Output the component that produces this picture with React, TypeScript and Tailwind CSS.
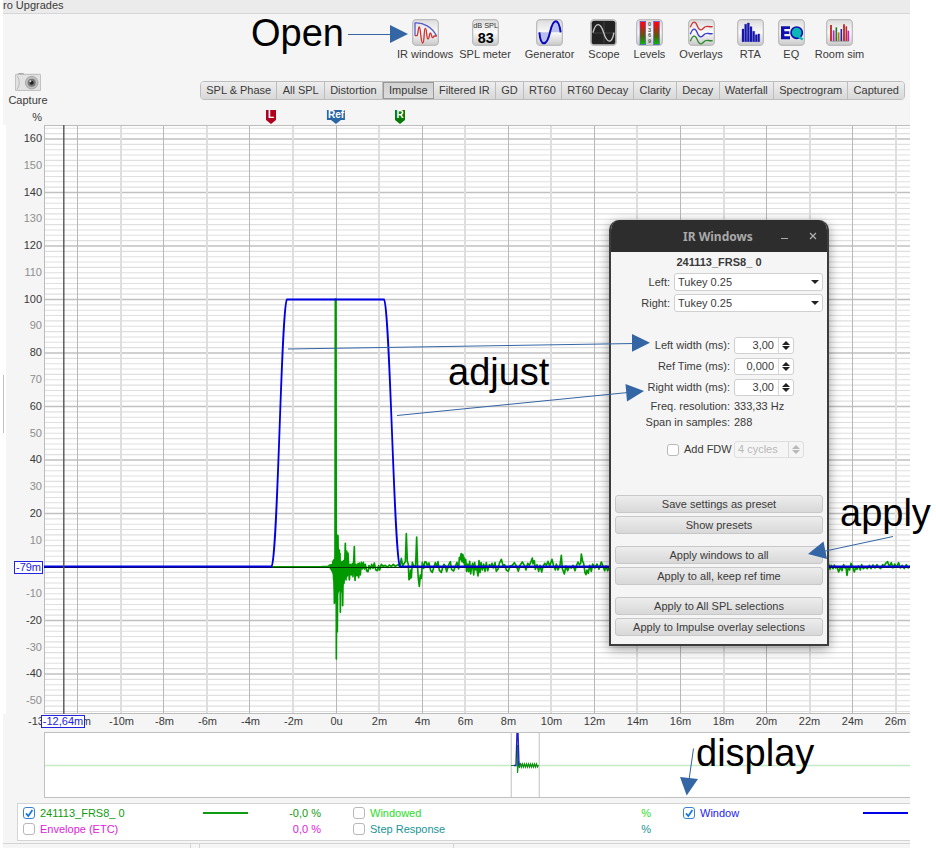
import React from "react";

const range = (from: number, to: number, step: number) =>
  Array.from({ length: Math.floor((to - from) / step) + 1 }, (_, i) => from + i * step);

function IconFrame({ children }: { children?: React.ReactNode }) {
  return (
    <svg viewBox="0 0 81 81" className="size-[27px]" aria-hidden="true">
      <defs>
        <linearGradient id="face" x1="0" y1="0" x2="0" y2="1">
          <stop offset="0" stopColor="#dcdcdc" />
          <stop offset="0.5" stopColor="#fafafa" />
          <stop offset="1" stopColor="#c9c9c9" />
        </linearGradient>
        <linearGradient id="level" x1="0" y1="0" x2="0" y2="1">
          <stop offset="0.1" stopColor="#ff0808" />
          <stop offset="0.65" stopColor="#506000" />
          <stop offset="1" stopColor="#00c000" />
        </linearGradient>
      </defs>
      <rect x="2" y="2" width="77" height="77" rx="11" fill="url(#face)" stroke="#bdbdbd" strokeWidth="4" />
      {children}
    </svg>
  );
}

const tools: { label: string; className: string; art: React.ReactNode }[] = [
  {
    label: "IR windows",
    className: "-mr-2",
    art: (
      <g fill="none" strokeWidth="4" strokeLinejoin="round">
        <path d="M9 50V12c24-2 52 12 65 40" stroke="#5a5acb" />
        <path d="M9 50h6c3 0 3-26 7-26s4 48 10 48 3-44 8-44 3 32 8 32 3-18 7-18 3 14 7 14 3-7 6-5h6" stroke="#d03030" />
      </g>
    ),
  },
  {
    label: "SPL meter",
    className: "",
    art: (
      <g fontFamily="Liberation Sans, sans-serif" textAnchor="middle">
        <text x="41" y="28" fontSize="22" fill="#333">dB SPL</text>
        <text x="41" y="73" fontSize="43" fontWeight="bold" fill="#000">83</text>
      </g>
    ),
  },
  {
    label: "Generator",
    className: "",
    art: (
      <g>
        <path d="M10 40h64C72 2 52 -4 43 40S20 96 10 40z" fill="#b9c0ee" />
        <path d="M10 40C14 84 32 84 42 40S68-4 74 40" fill="none" stroke="#0808b8" strokeWidth="6" />
      </g>
    ),
  },
  {
    label: "Scope",
    className: "",
    art: (
      <g fill="none">
        <rect x="5" y="5" width="71" height="71" rx="8" fill="#222" />
        <path d="M42 8v65M8 42h65" stroke="#555" strokeWidth="2" />
        <path d="M9 41c8-32 22-32 32 0s24 36 31 0" stroke="#c8c8c8" strokeWidth="4" />
      </g>
    ),
  },
  {
    label: "Levels",
    className: "",
    art: (
      <g>
        <rect x="12" y="7" width="17" height="70" fill="url(#level)" stroke="#5a5ae0" strokeWidth="2" />
        <rect x="53" y="7" width="17" height="70" fill="url(#level)" stroke="#5a5ae0" strokeWidth="2" />
        <g fontFamily="Liberation Sans, sans-serif" fontSize="17" fontWeight="bold" fill="#555" textAnchor="middle">
          <text x="41" y="22">0</text>
          <text x="41" y="38">3</text>
          <text x="41" y="55">6</text>
          <text x="41" y="72">9</text>
        </g>
      </g>
    ),
  },
  {
    label: "Overlays",
    className: "",
    art: (
      <g fill="none" strokeWidth="4">
        <path d="M7 25c7-20 15-20 20-6s12 18 20 8 14-2 27-4" stroke="#d03434" />
        <path d="M7 46c7-20 15-20 20-6s12 18 20 8 14-2 27-4" stroke="#3a3ad0" />
        <path d="M7 67c7-20 15-20 20-6s12 18 20 8 14-2 27-4" stroke="#2c8c2c" />
      </g>
    ),
  },
  {
    label: "RTA",
    className: "",
    art: (
      <path
        d="M15 68V30h6v38zM23 68V16h6v52zM31 68V12h6v56zM39 68V23h6v45zM47 68V37h6v31zM55 68V47h6v21zM63 68V45h5v23z"
        fill="#1616ac"
        stroke="#1616ac"
      />
    ),
  },
  {
    label: "EQ",
    className: "",
    art: (
      <g>
        <path d="M9 22h27v8H19v7h15v8H19v7h17v9H9z" fill="#1010b0" />
        <circle cx="56" cy="41" r="17" fill="#0ab8b8" stroke="#1010b0" strokeWidth="5" />
        <path d="M56 48l18 14" stroke="#0ab8b8" strokeWidth="7" />
      </g>
    ),
  },
  {
    label: "Room sim",
    className: "-ml-1",
    art: (
      <g fill="none" strokeWidth="5">
        <path d="M15 18v48" stroke="#c01010" />
        <path d="M23 34v32" stroke="#c020c0" />
        <path d="M31 25v41" stroke="#208020" />
        <path d="M38 40v26" stroke="#b08020" />
        <path d="M46 30v36" stroke="#2020c0" />
        <path d="M54 16v50" stroke="#c01010" />
        <path d="M61 22v44" stroke="#b03030" />
        <path d="M67 35v31" stroke="#c020c0" />
        <path d="M13 67h56" stroke="#888" strokeWidth="2" />
      </g>
    ),
  },
];

const tabs = [
  "SPL & Phase", "All SPL", "Distortion", "Impulse", "Filtered IR", "GD", "RT60",
  "RT60 Decay", "Clarity", "Decay", "Waterfall", "Spectrogram", "Captured",
];

const impulse =
  "-800,126 0,125 18,124 24,120 26,132 28,119 30,138 33,108 35,165 36,104 37,235 39,100 40,-678 42,-678 43,402 45,30 46,320 48,32 49,200 52,75 53,195 54,85 55,262 57,110 59,200 61,115 62,242 64,122 66,175 68,120 70,55 72,165 74,78 76,150 78,84 80,122 82,165 85,118 88,150 91,116 93,155 97,65 99,166 102,118 105,152 108,116 110,158 112,114 115,150 118,112 121,132 124,112 127,132 130,118 134,138 138,140 141,122 145,132 149,118 153,130 157,114 161,134 166,137 170,122 173,135 178,118 184,124 190,121 196,127 202,120 208,124 214,118 220,124 228,119 234,125 238,100 242,122 247,115 250,110 253,26 256,110 259,118 261,164 264,160 266,135 268,158 271,112 276,126 281,120 284,36 287,130 289,160 292,184 295,150 298,160 301,112 305,130 309,110 313,112 316,122 321,114 326,137 331,142 335,128 340,113 344,124 348,110 352,136 358,142 362,128 366,118 370,124 374,140 380,120 385,110 389,134 395,138 400,124 405,112 410,132 412,98 416,104 418,86 420,110 423,88";

const tailLeft =
  "0,55 4,42 8,44 10,68 12,52 14,80 17,58 20,94 23,72 26,95 29,64 32,102 35,80 38,70 41,105 44,68 47,90 50,82 54,108 57,62 60,98 63,68 67,90 71,72 75,94 79,68 83,92 88,74 92,80 96,70 100,84 105,68 109,94 114,88 118,70 124,58 129,76 134,74 139,90 145,94 150,78 157,76 163,68 169,78 175,94 180,76 187,66 193,76 198,90 203,70 208,76 213,65 217,54 219,72 223,62 226,88 231,74 236,94 240,76 245,96 249,80 254,70 259,76 264,64 269,78 276,58 281,78 286,90 289,72 294,90 300,76 304,46 307,86 313,102 318,78 323,92 328,80 334,84 339,76 345,92 349,78 354,66 358,74 362,70 364,42 368,64 371,70 375,98 378,104 381,90 385,100 389,76 394,94 398,72 405,84 411,72 417,88 424,66 429,78 434,92 438,78 443,92 449,80 460,74";

const tailRight =
  "680,351 686,342 690,358 694,346 699,356 703,345 707,354 711,350 716,366 721,352 726,362 731,344 735,354 738,350 741,376 745,350 749,360 753,340 758,350 763,366 767,352 771,358 776,348 781,360 785,344 790,356 796,351 802,356 808,346 813,356 819,345 825,354 831,344 836,352 842,356 848,344 853,348 857,340 863,335 868,350 874,338 879,354 884,342 890,352 896,338 901,354 907,346 913,356 919,344 925,354 930,348";

function ImpulsePlot() {
  return (
    <svg className="block h-[589px] w-full bg-white" role="img" aria-label="Impulse response">
      <g transform="translate(-44 -125)" fill="none">
        {range(-54, 164, 2).map((v) => (
          <path
            key={v}
            d={`M44 ${567 - v * 2.675}H3000`}
            stroke={v % 20 === 0 ? "#c0c0c0" : "#dfdfdf"}
            strokeWidth={v % 20 === 0 ? 1.3 : 1.1}
          />
        ))}
        {range(-12, 120, 4).map((t) => (
          <path key={t} d={`M${Math.floor(336 + 21.53 * t) + 0.5} 125V714`} stroke="#b8b8b8" />
        ))}
        {range(-10, 120, 4).map((t) => (
          <path key={t} d={`M${Math.round(336 + 21.53 * t)} 125V714`} stroke="#dedede" strokeWidth="2" />
        ))}
        <path d="M44 125.5H3000M44.5 125V714M44 713.5H3000" stroke="#bcbcbc" />
        <g stroke="#009a00" strokeWidth="5" strokeLinejoin="round">
          <path
            transform="translate(322 525) scale(0.3333)"
            d="M24 126L38 104L40 50H47L56 112L70 100L80 118L115 120L90 142L66 166L60 198H50L44 235H38L33 150z"
            fill="#009a00"
            stroke="none"
          />
          <polyline transform="translate(322 525) scale(0.3333)" points={impulse} />
          <polyline transform="translate(460 540) scale(0.3333)" points={tailLeft} />
          <polyline transform="translate(600 450) scale(0.3333)" points={tailRight} />
        </g>
        <path d="M44 567.5H3000" stroke="#111" />
        <path
          d="M44 566.5H271.5C278 560 281 305 287 299.5H384C390 305 394 560 400 566.5H3000"
          stroke="#0000e6"
          strokeWidth="1.8"
        />
        <path d="M272 567.5H400" stroke="#063806" />
        <path d="M63.8 125V714" stroke="#555" strokeWidth="1.4" />
      </g>
    </svg>
  );
}

function Overview() {
  return (
    <svg className="block h-[66px] w-full bg-white" aria-hidden="true">
      <g transform="translate(-44 -732)" fill="none">
        <path d="M44 765.5H3000" stroke="#c4ebc4" strokeWidth="1.4" />
        <path d="M511.3 732V797M539.3 732V797" stroke="#d2d2d2" strokeWidth="1.4" />
        <path
          d="M511 765.5H516M517.5 745V773l1-12 1 7 1-5 1 4 1-3 1 3 1-3 1 3 1-3 1 3 1-3 1 3 1-3 1 3 1-3 1 3 1-3 1 3 1-3 1 3 1-2"
          stroke="#109010"
          strokeWidth="1.2"
        />
        <path d="M514 765.5h2l1-33h1l1 33" stroke="#2020c8" strokeWidth="1.4" />
        <path d="M44 732.5H3000M44.5 732V797M44 797.5H3000" stroke="#c0c0c0" />
      </g>
    </svg>
  );
}

function Marker({ label, className, tip }: { label: string; className: string; tip: string }) {
  return (
    <div className={`absolute top-0 flex -translate-x-1/2 flex-col items-center ${className}`}>
      <span className="flex h-[10px] min-w-[10px] items-center justify-center bg-current px-px">
        <b className="text-[10px] leading-none text-white">{label}</b>
      </span>
      <svg viewBox="0 0 10 4" className="h-1 w-[10px]" aria-hidden="true">
        <path d="M0 0h10L5 4z" fill={tip} />
      </svg>
    </div>
  );
}

function Check({ id, checked }: { id: string; checked?: boolean }) {
  return (
    <span className="relative inline-flex size-3 shrink-0">
      <input
        id={id}
        type="checkbox"
        defaultChecked={checked}
        className="peer size-3 appearance-none rounded-[3px] border border-[#b8b8b8] bg-white checked:border-[#3b82d0]"
      />
      <svg viewBox="0 0 12 12" className="pointer-events-none absolute inset-0 hidden peer-checked:block" aria-hidden="true">
        <path d="M3 6.4l2.3 2.6L9.4 3" fill="none" stroke="#1478e0" strokeWidth="1.7" />
      </svg>
    </span>
  );
}

function Trace({ id, name, color, value, checked, line }: {
  id: string; name: string; color: string; value?: string; checked?: boolean; line?: string;
}) {
  return (
    <div className={`flex h-4 items-center gap-[5px] ${color}`}>
      <Check id={id} checked={checked} />
      <label htmlFor={id} className="flex-1 whitespace-nowrap">{name}</label>
      {line && <span className={`h-[2px] w-[45px] ${line}`} />}
      {value && <span className="w-[68px] text-right">{value}</span>}
    </div>
  );
}

function Choice({ id, label }: { id: string; label: string }) {
  return (
    <div className="flex items-center gap-1">
      <label htmlFor={id} className="w-[55px] text-right">{label}</label>
      <span className="relative flex flex-1">
        <select id={id} className="h-[18px] w-full appearance-none rounded-[3px] border border-[#d0d0d0] bg-white px-[3px] leading-none">
          <option>Tukey 0.25</option>
        </select>
        <svg viewBox="0 0 8 4" className="pointer-events-none absolute right-1 top-[7px] h-1 w-2" aria-hidden="true">
          <path d="M0 0h8L4 4z" fill="#222" />
        </svg>
      </span>
    </div>
  );
}

function Spinner({ id, value, className, disabled }: { id: string; value: string; className: string; disabled?: boolean }) {
  return (
    <span className={`flex h-[17px] rounded-[3px] border ${disabled ? "border-[#dedede] text-[#b8b8b8]" : "border-[#d0d0d0] bg-white"} ${className}`}>
      <input id={id} defaultValue={value} disabled={disabled} className={`min-w-0 flex-1 ${disabled ? "pl-[3px]" : "pr-1 text-right"}`} />
      <span className="flex w-[15px] flex-col items-center justify-center gap-px border-l border-[#d8d8d8]">
        <button type="button" aria-label="Increase" disabled={disabled} className="block h-1">
          <svg viewBox="0 0 8 4" className="block h-1 w-2"><path d="M4 0l4 4H0z" fill={disabled ? "#b8b8b8" : "#222"} /></svg>
        </button>
        <button type="button" aria-label="Decrease" disabled={disabled} className="block h-1">
          <svg viewBox="0 0 8 4" className="block h-1 w-2"><path d="M0 0h8L4 4z" fill={disabled ? "#b8b8b8" : "#222"} /></svg>
        </button>
      </span>
    </span>
  );
}

function Field({ id, label, value }: { id: string; label: string; value: string }) {
  return (
    <div className="flex items-center gap-1">
      <label htmlFor={id} className="w-[115px] text-right">{label}</label>
      <Spinner id={id} value={value} className="w-[60px]" />
    </div>
  );
}

const actionGroups = [
  ["Save settings as preset", "Show presets"],
  ["Apply windows to all", "Apply to all, keep ref time"],
  ["Apply to All SPL selections", "Apply to Impulse overlay selections"],
];

function IrWindowsDialog() {
  return (
    <section
      aria-label="IR Windows"
      className="absolute left-[609px] top-[220px] w-[220px] overflow-hidden rounded-t-[10px] border-2 border-t-0 border-[#3c3c3c] bg-[#f5f5f5] shadow-[0_3px_12px_rgba(0,0,0,0.4)]"
    >
      <header className="flex h-8 items-center bg-[#2d2d2d] font-['Noto_Sans',sans-serif] text-[#a9a9a9]">
        <h2 className="flex-1 pl-[72px] pt-px text-[12px] font-bold">IR Windows</h2>
        <button type="button" aria-label="Minimize" className="mr-[21px] h-3">
          <svg viewBox="0 0 8 8" className="size-2"><path d="M1 6.5h7" stroke="#a9a9a9" /></svg>
        </button>
        <button type="button" aria-label="Close" className="mr-[10px]">
          <svg viewBox="0 0 8 8" className="size-2"><path d="M1 1l6 6M7 1L1 7" stroke="#b5b5b5" strokeWidth="1.1" /></svg>
        </button>
      </header>
      <div className="flex flex-col px-1 pb-2 pt-1">
        <h3 className="h-[17px] text-center font-bold leading-[13px]">241113_FRS8_ 0</h3>
        <div className="flex flex-col gap-[3px]">
          <Choice id="left" label="Left:" />
          <Choice id="right" label="Right:" />
        </div>
        <div className="mt-[25px] flex flex-col gap-1">
          <Field id="lw" label="Left width (ms):" value="3,00" />
          <Field id="rt" label="Ref Time (ms):" value="0,000" />
          <Field id="rw" label="Right width (ms):" value="3,00" />
        </div>
        <dl className="mt-[2px] grid grid-cols-[115px_1fr] gap-x-1 leading-4">
          <dt className="text-right">Freq. resolution:</dt>
          <dd>333,33 Hz</dd>
          <dt className="text-right">Span in samples:</dt>
          <dd>288</dd>
        </dl>
        <div className="mt-[11px] flex items-center">
          <span className="flex w-[119px] items-center gap-[5px] pl-[52px]">
            <Check id="fdw" />
            <label htmlFor="fdw" className="whitespace-nowrap">Add FDW</label>
          </span>
          <Spinner id="cycles" value="4 cycles" className="w-[70px]" disabled />
        </div>
        <div className="mt-[37px] flex flex-col gap-3">
          {actionGroups.map((group) => (
            <div key={group[0]} className="flex flex-col gap-[3px]">
              {group.map((label) => (
                <button
                  key={label}
                  type="button"
                  className="h-[18px] rounded-[3px] border border-[#c8c8c8] bg-linear-to-b from-[#ededed] to-[#d8d8d8] leading-none"
                >
                  {label}
                </button>
              ))}
            </div>
          ))}
        </div>
      </div>
    </section>
  );
}

function Annotations() {
  return (
    <div className="pointer-events-none absolute inset-0 text-[38px] leading-none text-black">
      <svg className="absolute inset-0 size-full" aria-hidden="true">
        <g stroke="#3465a4" strokeWidth="1">
          <path d="M348 34.5H392M288 349L634 343.5M397 415.5L628 392.5M893 536.5L823 551.5M693.5 748.5L689 780" />
        </g>
        <g fill="#3465a4">
          <path d="M408 34L390 25V43z" />
          <path d="M650 342.7L632 334V351.7z" />
          <path d="M644 391L625.5 384L627 401.5z" />
          <path d="M808 554L823.5 541.5L827 559z" />
          <path d="M686.7 795.5L680 777L698 779z" />
        </g>
      </svg>
      <span className="absolute left-[251px] top-[14px]">Open</span>
      <span className="absolute left-[448px] top-[353px]">adjust</span>
      <span className="absolute left-[840px] top-[494px]">apply</span>
      <span className="absolute left-[696px] top-[734px]">display</span>
    </div>
  );
}

export default function App() {
  return (
    <div className="relative min-h-screen overflow-hidden bg-white font-['Liberation_Sans',Arial,sans-serif] text-[11px] text-[#3a3a3a]">
      <main className="ml-[3px] mr-[26px] bg-[#f5f5f5]">
        <div className="h-[14px] border-b border-[#d6d6d6] bg-[#ebebeb] leading-[10px]">ro Upgrades</div>

        <nav className="flex gap-[14px] pl-[394px] pt-[5px]" aria-label="Tools">
          {tools.map((tool) => (
            <button key={tool.label} type="button" className={`flex shrink-0 flex-col items-center ${tool.className}`}>
              <IconFrame>{tool.art}</IconFrame>
              <span className="leading-[17px]">{tool.label}</span>
            </button>
          ))}
        </nav>

        <div className="flex h-[47px] items-start pt-[10px]">
          <button type="button" className="flex w-[50px] flex-col items-center">
            <svg viewBox="0 0 78 54" className="h-[18px] w-[26px]" aria-hidden="true">
              <rect x="10" y="0" width="16" height="5" fill="#aaa" />
              <rect x="1" y="4" width="76" height="49" rx="3" fill="#e2e2e2" stroke="#a5a5a5" strokeWidth="2" />
              <path d="M6 8q14 20 0 42" fill="none" stroke="#bbb" strokeWidth="3" />
              <circle cx="50" cy="29" r="19" fill="#bdbdbd" stroke="#999" strokeWidth="2" />
              <circle cx="50" cy="29" r="12" fill="#777" />
              <circle cx="50" cy="29" r="6" fill="#222" />
              <circle cx="46" cy="25" r="3" fill="#ddd" />
            </svg>
            <span className="leading-[18px]">Capture</span>
          </button>
          <div role="tablist" className="ml-[147px] mt-2 flex h-[19px] w-[705px] shrink-0 overflow-hidden rounded-[4px] border border-[#bdbdbd]">
            {tabs.map((tab) => (
              <button
                key={tab}
                type="button"
                role="tab"
                aria-selected={tab === "Impulse"}
                className="flex-auto whitespace-nowrap border-r border-[#bdbdbd] bg-linear-to-b from-[#eeeeee] to-[#d8d8d8] leading-none last:border-r-0 aria-selected:border aria-selected:border-[#999] aria-selected:from-[#d2d2d2] aria-selected:to-[#dcdcdc]"
              >
                {tab}
              </button>
            ))}
          </div>
        </div>

        <div className="relative flex h-[15px]">
          <span className="w-[39px] text-right leading-[15px]">%</span>
          <Marker label="L" className="left-[268px] text-[#b00020]" tip="#b00020" />
          <Marker label="Ref" className="left-[333px] text-[#2a66a4]" tip="#2a66a4" />
          <Marker label="R" className="left-[397px] text-[#087808]" tip="#087808" />
        </div>

        <div className="relative flex">
          <div className="flex w-[41px] shrink-0 flex-col border-l-[3px] border-white pr-[2px] text-right">
            {range(-50, 160, 10).reverse().map((v) => (
              <span key={v} className={`flex flex-1 items-center justify-end ${v % 20 === 0 ? "text-[#3a3a3a]" : "text-[#8e8e8e]"}`}>
                {v === 0 ? "" : v}
              </span>
            ))}
          </div>
          <div className="min-w-0 flex-1 overflow-hidden">
            <ImpulsePlot />
          </div>
          <span className="absolute left-0 top-[250px] h-[58px] w-px bg-[#c0c0c0]" />
          <output className="absolute left-[11px] top-[436px] h-[13px] w-[29px] border border-[#2222e0] bg-white text-center leading-[11px] text-[#2222e0]">
            -79m
          </output>
        </div>

        <div className="relative flex h-[18px] overflow-hidden leading-[15px]">
          <span className="w-[54px] shrink-0 pl-[25px]">-13</span>
          {range(-12, 26, 2).map((t) => (
            <span key={t} className="w-[43px] shrink-0 text-center">{t === 0 ? "0u" : `${t}m`}</span>
          ))}
          <output className="absolute left-[38px] top-px h-[13px] w-[44px] border border-[#2222e0] bg-white text-center leading-[11px] text-[#2222e0]">
            -12,64m
          </output>
        </div>

        <div className="pl-[41px]">
          <Overview />
        </div>

        <div className="ml-[14px] mt-[5px] grid grid-cols-[330px_330px_1fr] border border-r-0 border-[#d4d4d4] bg-white pb-[3px] pl-[5px] pt-px">
          <div className="pr-8">
            <Trace id="t1" name="241113_FRS8_ 0" color="text-[#109a10]" line="bg-[#109a10]" value="-0,0 %" checked />
            <Trace id="t2" name="Envelope (ETC)" color="text-[#dd22dd]" value="0,0 %" />
          </div>
          <div className="pr-8">
            <Trace id="t3" name="Windowed" color="text-[#28dd28]" value="%" />
            <Trace id="t4" name="Step Response" color="text-[#209494]" value="%" />
          </div>
          <div className="pr-[2px]">
            <Trace id="t5" name="Window" color="text-[#2222ee]" line="bg-[#0000e6]" checked />
          </div>
        </div>

        <footer className="mt-[2px] flex h-[5px] border-t border-[#d4d4d4]">
          <span className="w-[188px] border-r border-[#d4d4d4]" />
          <span className="w-[9px] border-r border-[#d4d4d4]" />
          <span className="w-[254px] border-r border-[#d4d4d4]" />
        </footer>
      </main>

      <IrWindowsDialog />
      <Annotations />
    </div>
  );
}
